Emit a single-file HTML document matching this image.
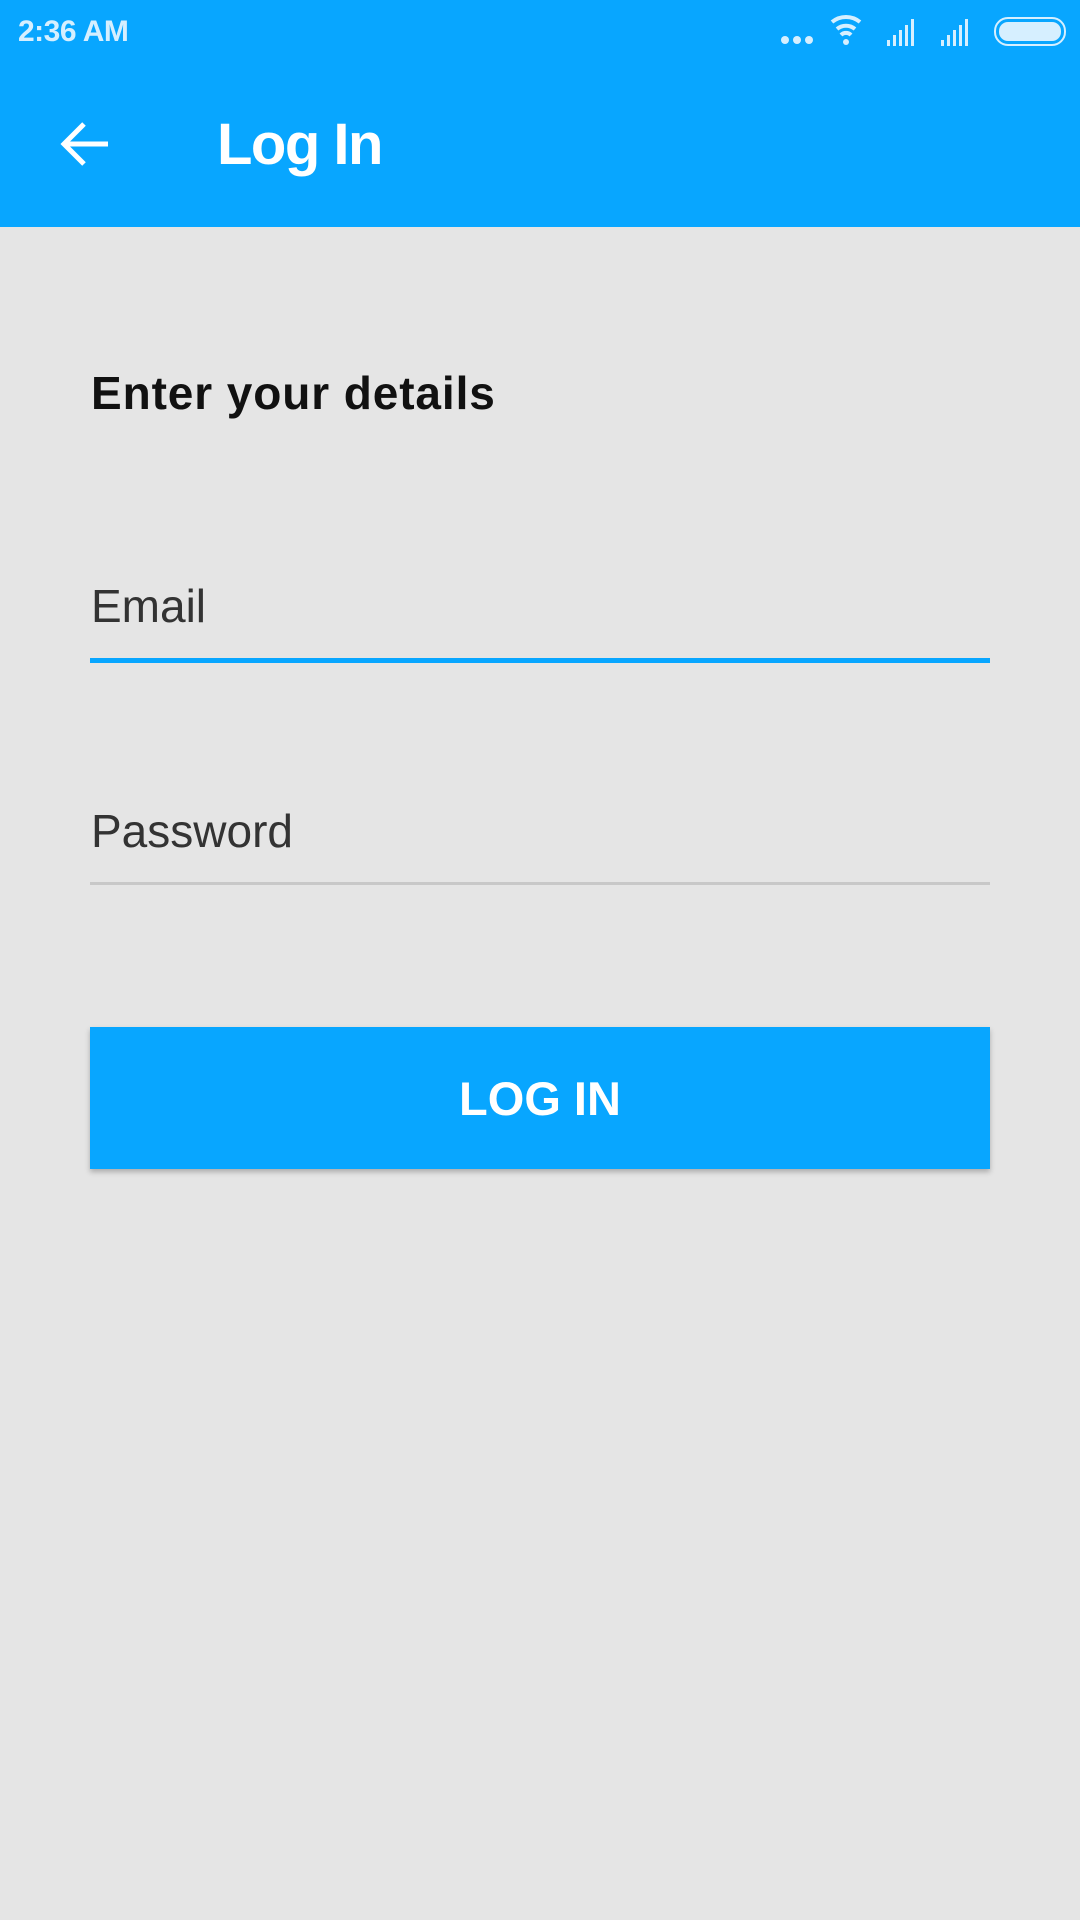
<!DOCTYPE html>
<html><head><meta charset="utf-8"><style>
html,body{margin:0;padding:0;}
body{width:1080px;height:1920px;background:#e5e5e5;position:relative;overflow:hidden;font-family:"Liberation Sans",sans-serif;}
.bar{position:absolute;left:0;top:0;width:1080px;height:227px;background:#08a6ff;}
.abs{position:absolute;white-space:nowrap;}
</style></head><body>
<div class="bar"></div>
<div class="abs" style="left:18px;top:15px;font-size:30px;font-weight:bold;color:#d6efff;letter-spacing:-0.5px;">2:36 AM</div>
<svg class="abs" style="left:775px;top:14px" width="295" height="34" viewBox="0 0 295 34">
 <g fill="#d6efff">
  <circle cx="10" cy="26" r="4"/><circle cx="22" cy="26" r="4"/><circle cx="34" cy="26" r="4"/>
  <path d="M57 8a22 22 0 0 1 28 0" stroke="#d6efff" stroke-width="4" fill="none"/>
  <path d="M62 15a14 14 0 0 1 18 0" stroke="#d6efff" stroke-width="4" fill="none"/>
  <path d="M66 21a7 7 0 0 1 10 0" stroke="#d6efff" stroke-width="4" fill="none"/>
  <circle cx="71" cy="28" r="3"/>
  <rect x="112" y="26" width="3" height="6"/><rect x="118" y="21" width="3" height="11"/><rect x="124" y="16" width="3" height="16"/><rect x="130" y="11" width="3" height="21"/><rect x="136" y="5" width="3" height="27"/>
  <rect x="166" y="26" width="3" height="6"/><rect x="172" y="21" width="3" height="11"/><rect x="178" y="16" width="3" height="16"/><rect x="184" y="11" width="3" height="21"/><rect x="190" y="5" width="3" height="27"/>
  <rect x="220" y="4" width="70" height="27" rx="13" fill="none" stroke="#d6efff" stroke-width="2"/>
  <rect x="224" y="8" width="62" height="19" rx="9"/>
 </g>
</svg>
<svg class="abs" style="left:58px;top:120px" width="52" height="48" viewBox="0 0 52 48">
 <path d="M50 24H6M26 4L6 24L26 44" stroke="#fff" stroke-width="5" fill="none"/>
</svg>
<div class="abs" style="left:217px;top:111px;font-size:58px;font-weight:bold;color:#fff;letter-spacing:-1.5px;">Log In</div>
<div class="abs" style="left:91px;top:366px;font-size:46px;font-weight:bold;color:#111;letter-spacing:0.9px;">Enter your details</div>
<div class="abs" style="left:91px;top:579px;font-size:46px;color:#333;">Email</div>
<div class="abs" style="left:90px;top:658px;width:900px;height:5px;background:#08a6ff;"></div>
<div class="abs" style="left:91px;top:804px;font-size:46px;color:#333;">Password</div>
<div class="abs" style="left:90px;top:882px;width:900px;height:3px;background:#c8c8c8;"></div>
<div class="abs" style="left:90px;top:1027px;width:900px;height:142px;background:#08a6ff;box-shadow:0 3px 5px rgba(0,0,0,0.25);"></div>
<div class="abs" style="left:90px;top:1071px;width:900px;text-align:center;font-size:47px;font-weight:bold;color:#fff;">LOG IN</div>
</body></html>
